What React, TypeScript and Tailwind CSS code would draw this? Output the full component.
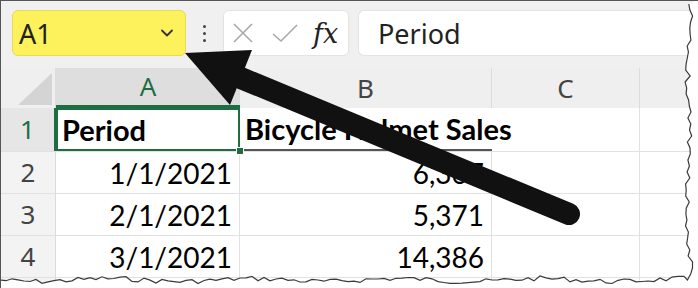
import React from 'react';
import { ChevronDown } from 'lucide-react';

const ui = { fontFamily: '"Noto Sans", "Open Sans", sans-serif' };
const cell = { fontFamily: 'Lato, "Liberation Sans", sans-serif' };

// jagged torn-paper edge along the right and bottom sides
function tornEdge() {
  let seed = 7;
  const rnd = () => {
    seed = (seed * 9301 + 49297) % 233280;
    return seed / 233280;
  };
  const bottom: string[] = [];
  for (let x = 0; x <= 686; x += 6) {
    const y = 280 + (rnd() - 0.5) * 5 + Math.sin(x / 23) * 1.5;
    bottom.push(`${x},${y.toFixed(1)}`);
  }
  const right: string[] = [];
  for (let y = 280; y >= 0; y -= 6) {
    const x = 689 + (rnd() - 0.5) * 6 + Math.sin(y / 19) * 1.5;
    right.push(`${x.toFixed(1)},${y}`);
  }
  const edge = [...bottom, ...right];
  return {
    fill: `M698,0 L698,288 L0,288 L${edge.join(' L')} Z`,
    line: `M${edge.join(' L')}`,
  };
}

const rows = [
  { n: '2', a: '1/1/2021', b: '6,367' },
  { n: '3', a: '2/1/2021', b: '5,371' },
  { n: '4', a: '3/1/2021', b: '14,386' },
];

export default function App() {
  const torn = tornEdge();
  return (
    <div className="relative w-[698px] h-[288px] overflow-hidden bg-white border-t border-l border-[#555]">
      {/* Toolbar */}
      <div className="flex items-start h-[67px] bg-[#f0f0f0] pt-[9px] pl-[11px]" style={ui}>
        <div className="w-[174px] h-[46px] bg-[#fdf15c] rounded-[6px] border border-[#e6dc55] flex items-center justify-between pl-[6px] pr-[8px]">
          <span className="text-[27px] text-[#222] leading-none">A1</span>
          <ChevronDown className="w-[20px] h-[20px] text-[#333]" strokeWidth={2.2} />
        </div>
        <div className="w-[37px] h-[46px] flex flex-col items-center justify-center gap-[4px]">
          <span className="w-[3px] h-[3px] bg-[#444] rounded-full" />
          <span className="w-[3px] h-[3px] bg-[#444] rounded-full" />
          <span className="w-[3px] h-[3px] bg-[#444] rounded-full" />
        </div>
        <div className="w-[126px] h-[46px] bg-white rounded-[6px] border border-[#e3e3e3] flex items-center pl-[8px]">
          <svg width="22" height="22" viewBox="0 0 22 22" className="mr-[17px]">
            <path d="M2 2 L20 20 M20 2 L2 20" stroke="#a8a8a8" strokeWidth="1.6" fill="none" />
          </svg>
          <svg width="28" height="20" viewBox="0 0 28 20" className="mr-[14px]">
            <path d="M2 11 L10 18 L26 2" stroke="#a8a8a8" strokeWidth="1.6" fill="none" />
          </svg>
          <span className="text-[27px] italic text-[#222] leading-none" style={{ fontFamily: '"DejaVu Serif", "Liberation Serif", serif' }}>
            fx
          </span>
        </div>
        <div className="ml-[9px] flex-1 h-[46px] bg-white rounded-l-[6px] border border-r-0 border-[#e3e3e3] flex items-center pl-[19px]">
          <span className="text-[27px] text-[#222] leading-none">Period</span>
        </div>
      </div>

      {/* Column headers */}
      <div className="flex h-[40px] bg-[#efefef] text-[26px] text-[#444]" style={ui}>
        <div className="w-[55px] relative border-r border-[#dcdcdc]">
          <div className="absolute right-[3px] bottom-[3px] w-0 h-0 border-l-[34px] border-l-transparent border-b-[32px] border-b-[#d4d4d4]" />
        </div>
        <div className="w-[184px] flex items-center justify-center bg-[#dedede] border-b-[3px] border-[#1e6e42] text-[#1e6e42]">A</div>
        <div className="w-[252px] flex items-center justify-center border-r border-[#dcdcdc]">B</div>
        <div className="w-[148px] flex items-center justify-center border-r border-[#dcdcdc]">C</div>
        <div className="flex-1" />
      </div>

      {/* Row 1 */}
      <div className="flex h-[44px] border-b border-[#e1e1e1]">
        <div className="w-[55px] flex items-center justify-center bg-[#e6e6e6] text-[26px] text-[#1e6e42] border-r-[2px] border-[#1e6e42]" style={ui}>1</div>
        <div className="w-[184px] relative flex items-center pl-[6px] text-[29px] font-bold text-black" style={cell}>
          <div className="absolute inset-0 border-2 border-[#1e6e42]" />
          <div className="absolute right-[-4px] bottom-[-4px] w-[8px] h-[8px] bg-[#1e6e42] border border-white" />
          Period
        </div>
        <div className="w-[252px] flex items-center pl-[5px] text-[29px] font-bold text-black whitespace-nowrap border-b-2 border-[#555]" style={cell}>
          Bicycle Helmet Sales
        </div>
        <div className="w-[148px] border-r border-[#e1e1e1]" />
        <div className="flex-1" />
      </div>

      {rows.map((r) => (
        <div key={r.n} className="flex h-[42px] border-b border-[#e1e1e1]">
          <div className="w-[55px] flex items-center justify-center bg-[#f3f3f3] text-[26px] text-[#444] border-r border-[#dcdcdc]" style={ui}>
            {r.n}
          </div>
          <div className="w-[184px] flex items-center justify-end pr-[7px] text-[28px] text-black border-r border-[#e1e1e1]" style={cell}>
            {r.a}
          </div>
          <div className="w-[252px] flex items-center justify-end pr-[7px] text-[28px] text-black border-r border-[#e1e1e1]" style={cell}>
            {r.b}
          </div>
          <div className="w-[148px] border-r border-[#e1e1e1]" />
          <div className="flex-1" />
        </div>
      ))}
      <div className="flex h-[12px]">
        <div className="w-[55px] bg-[#f3f3f3] border-r border-[#dcdcdc]" />
        <div className="w-[184px] border-r border-[#e1e1e1]" />
        <div className="w-[252px] border-r border-[#e1e1e1]" />
        <div className="w-[148px] border-r border-[#e1e1e1]" />
      </div>

      {/* Arrow callout */}
      <svg className="absolute left-[-1px] top-[-1px] pointer-events-none" width="698" height="288" viewBox="0 0 698 288">
        <polygon points="185,53 252,50 230,105" fill="#111" />
        <line x1="236" y1="76" x2="569" y2="214" stroke="#111" strokeWidth="22" strokeLinecap="round" />
        <path d={torn.fill} fill="#fff" />
        <path d={torn.line} fill="none" stroke="#3a3a3a" strokeWidth="1.2" />
      </svg>
    </div>
  );
}
